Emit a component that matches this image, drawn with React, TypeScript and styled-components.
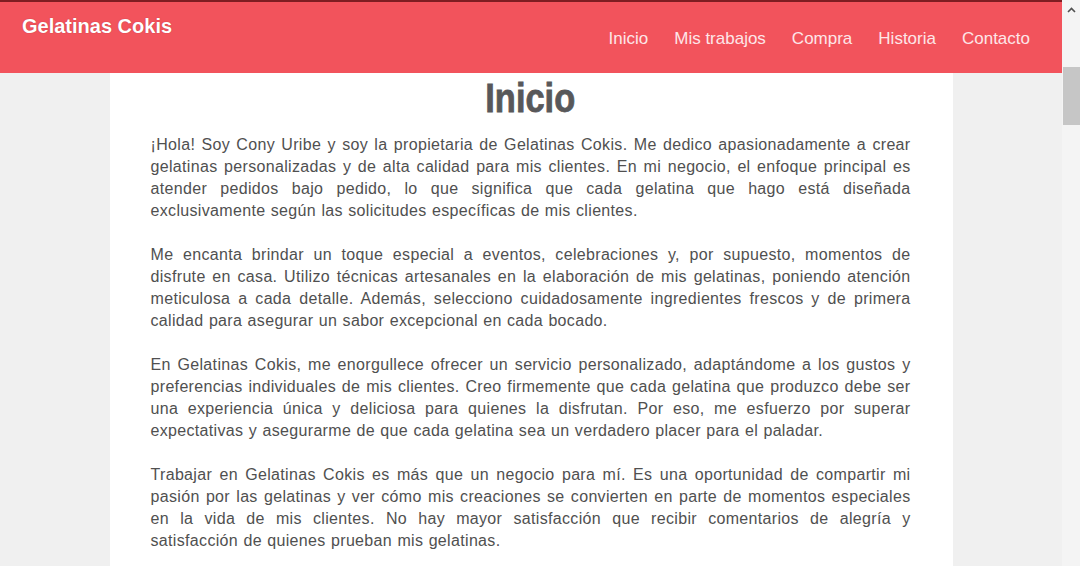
import React from "react";
import styled, { createGlobalStyle } from "styled-components";

const Global = createGlobalStyle`
  html, body { margin: 0; padding: 0; }
  body { background: #f0f0f0; font-family: "Liberation Sans", Arial, sans-serif; overflow: hidden; }
`;

const Frame = styled.div`
  display: flex;
  width: 1080px;
  height: 566px;
  overflow: hidden;
`;

const Viewport = styled.div`
  flex: 1;
  display: flex;
  flex-direction: column;
  background: #f0f0f0;
  min-width: 0;
`;

const Header = styled.header`
  height: 73px;
  box-sizing: border-box;
  border-top: 2px solid #7e1d22;
  background: #f2535c;
  display: flex;
  justify-content: space-between;
  align-items: flex-start;
  padding: 0 32px 0 22px;
  flex-shrink: 0;
`;

const Brand = styled.div`
  padding-top: 12px;
  font-size: 20px;
  line-height: 24px;
  font-weight: bold;
  color: #ffffff;
  text-shadow: 0 0 1px rgba(120, 20, 30, 0.5);
`;

const Nav = styled.nav`
  display: flex;
  gap: 26px;
  padding-top: 26px;
`;

const NavLink = styled.a`
  font-size: 17px;
  line-height: 22px;
  color: #fde6e8;
  text-decoration: none;
`;

const Card = styled.main`
  width: 843px;
  margin: 0 auto;
  box-sizing: border-box;
  background: #ffffff;
  padding: 0 42px 0 41px;
  flex: 1;
`;

const Title = styled.h1`
  margin: 0;
  text-align: center;
  font-family: Impact, "Liberation Sans", sans-serif;
  font-weight: 900;
  font-size: 40px;
  line-height: 50px;
  color: #58585a;
`;

const TitleText = styled.span`
  display: inline-block;
  transform: scaleX(0.86);
  -webkit-text-stroke: 0.8px #58585a;
`;

const Para = styled.p`
  margin: 0 0 22px;
  font-size: 16px;
  letter-spacing: 0.33px;
  word-spacing: 0.6px;
  line-height: 22px;
  color: #505050;
  text-align: justify;
  &:first-of-type { margin-top: 11px; }
`;

const Scrollbar = styled.div`
  width: 18px;
  flex-shrink: 0;
  background: #f4f4f4;
  display: flex;
  flex-direction: column;
  align-items: stretch;
`;

const Arrow = styled.div`
  height: 17px;
  display: flex;
  align-items: center;
  justify-content: center;
  margin-top: 1px;
`;

const Thumb = styled.div`
  margin-top: 49px;
  margin-left: 1px;
  height: 58px;
  background: #c6c6c6;
`;

const links = ["Inicio", "Mis trabajos", "Compra", "Historia", "Contacto"];

const paragraphs = [
  "¡Hola! Soy Cony Uribe y soy la propietaria de Gelatinas Cokis. Me dedico apasionadamente a crear gelatinas personalizadas y de alta calidad para mis clientes. En mi negocio, el enfoque principal es atender pedidos bajo pedido, lo que significa que cada gelatina que hago está diseñada exclusivamente según las solicitudes específicas de mis clientes.",
  "Me encanta brindar un toque especial a eventos, celebraciones y, por supuesto, momentos de disfrute en casa. Utilizo técnicas artesanales en la elaboración de mis gelatinas, poniendo atención meticulosa a cada detalle. Además, selecciono cuidadosamente ingredientes frescos y de primera calidad para asegurar un sabor excepcional en cada bocado.",
  "En Gelatinas Cokis, me enorgullece ofrecer un servicio personalizado, adaptándome a los gustos y preferencias individuales de mis clientes. Creo firmemente que cada gelatina que produzco debe ser una experiencia única y deliciosa para quienes la disfrutan. Por eso, me esfuerzo por superar expectativas y asegurarme de que cada gelatina sea un verdadero placer para el paladar.",
  "Trabajar en Gelatinas Cokis es más que un negocio para mí. Es una oportunidad de compartir mi pasión por las gelatinas y ver cómo mis creaciones se convierten en parte de momentos especiales en la vida de mis clientes. No hay mayor satisfacción que recibir comentarios de alegría y satisfacción de quienes prueban mis gelatinas.",
];

export default function App() {
  return (
    <>
      <Global />
      <Frame>
        <Viewport>
          <Header>
            <Brand>Gelatinas Cokis</Brand>
            <Nav>
              {links.map((l) => (
                <NavLink key={l} href="#">{l}</NavLink>
              ))}
            </Nav>
          </Header>
          <Card>
            <Title><TitleText>Inicio</TitleText></Title>
            {paragraphs.map((p, i) => (
              <Para key={i}>{p}</Para>
            ))}
          </Card>
        </Viewport>
        <Scrollbar>
          <Arrow>
            <svg width="9" height="6" viewBox="0 0 9 6">
              <path d="M1 5 L4.5 1.5 L8 5" fill="none" stroke="#505050" strokeWidth="1.6" />
            </svg>
          </Arrow>
          <Thumb />
        </Scrollbar>
      </Frame>
    </>
  );
}
